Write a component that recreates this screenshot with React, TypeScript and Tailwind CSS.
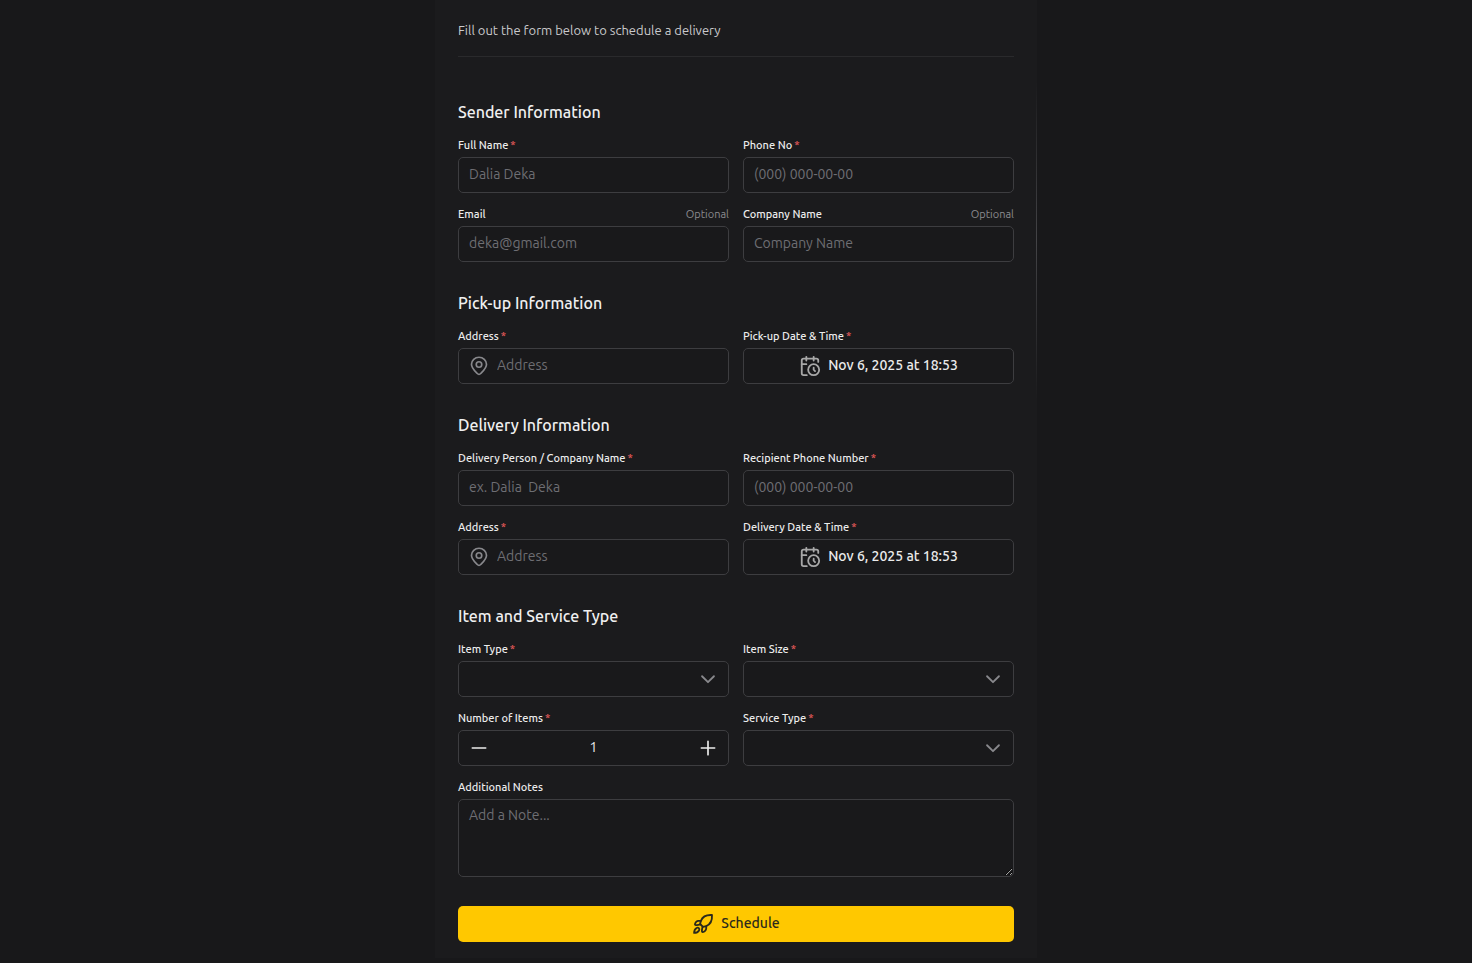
import { useId, useState, type ReactNode } from 'react';

const box =
  'w-full h-9 rounded-[5px] border border-[#3d3d40] bg-[#19191b] text-sm leading-5 text-[#ececec] placeholder:text-[#6e6e73] outline-none';

function Icon({ children, className }: { children: ReactNode; className?: string }) {
  return (
    <svg
      viewBox="0 0 24 24"
      fill="none"
      stroke="currentColor"
      strokeWidth="2"
      strokeLinecap="round"
      strokeLinejoin="round"
      aria-hidden="true"
      className={className}
    >
      {children}
    </svg>
  );
}

function PinIcon() {
  return (
    <Icon className="size-5 shrink-0 text-[#88888c]">
      <path d="M12 22 C11.2 22 10.5 21.6 9.9 21 C7 18.1 3 14.8 3 10 A9 8.5 0 0 1 21 10 C21 14.8 17 18.1 14.1 21 C13.5 21.6 12.8 22 12 22 Z" />
      <circle cx="12" cy="10.2" r="3.3" />
    </Icon>
  );
}

function CalendarClockIcon() {
  return (
    <Icon className="size-[22px] shrink-0 text-[#a8a8a8]">
      <path d="M21 7.5V6a2 2 0 0 0-2-2H5a2 2 0 0 0-2 2v14a2 2 0 0 0 2 2h3.5" />
      <path d="M16 2v4M8 2v4M3 10h5" />
      <circle cx="16" cy="16" r="6" />
      <path d="M16 13.8V16l1.5 1.5" />
    </Icon>
  );
}

function RocketIcon() {
  return (
    <Icon className="size-[22px] shrink-0">
      <path d="M21.8 2.2C15.5 1.8 11.5 4 9.7 8.5L8.8 12 12 15.2 15.5 14.3C20 12.5 22.2 8.5 21.8 2.2Z" />
      <path d="M9.7 8.5H7C5.3 8.5 3.4 10.5 3.2 12.3C3.1 13.7 6.5 13.2 9.2 12.4" />
      <path d="M15.5 14.3V17C15.5 18.7 13.5 20.6 11.7 20.8C10.3 20.9 10.8 17.5 11.6 14.8" />
      <path d="M5 16.3C6.7 15.2 8.8 17.3 7.7 19C6.7 20.7 4.5 21.7 2.3 21.7C2.3 19.5 3.3 17.3 5 16.3Z" />
    </Icon>
  );
}

function Chevron() {
  return (
    <Icon className="pointer-events-none col-start-1 row-start-1 mr-2.5 size-[22px] justify-self-end text-[#88888c]">
      <path d="m5.5 9 6.5 6.5L18.5 9" />
    </Icon>
  );
}

function Label({ htmlFor, text, required, optional }: { htmlFor: string; text: string; required?: boolean; optional?: boolean }) {
  return (
    <div className="flex justify-between text-[11px] leading-4">
      <label htmlFor={htmlFor} className="font-medium text-[#ececec]">
        {text}
        {required && <span className="ml-0.5 text-[#e55a5a]">*</span>}
      </label>
      {optional && <span className="text-[#8b8b8f]">Optional</span>}
    </div>
  );
}

type FieldProps = { label: string; required?: boolean; optional?: boolean };

function TextField({ placeholder, type = 'text', ...f }: FieldProps & { placeholder: string; type?: string }) {
  const id = useId();
  return (
    <div className="flex min-w-0 flex-col gap-1">
      <Label htmlFor={id} text={f.label} required={f.required} optional={f.optional} />
      <input id={id} type={type} placeholder={placeholder} className={`${box} px-2.5 pb-0.5`} />
    </div>
  );
}

function AddressField() {
  const id = useId();
  return (
    <div className="flex min-w-0 flex-col gap-1">
      <Label htmlFor={id} text="Address" required />
      <div className={`${box} flex items-center gap-2 px-2.5`}>
        <PinIcon />
        <input
          id={id}
          placeholder="Address"
          className="w-full min-w-0 bg-transparent pb-0.5 outline-none placeholder:text-[#6e6e73]"
        />
      </div>
    </div>
  );
}

function DateField({ label }: { label: string }) {
  const id = useId();
  return (
    <div className="flex min-w-0 flex-col gap-1">
      <Label htmlFor={id} text={label} required />
      <button id={id} type="button" className={`${box} flex items-center justify-center gap-[7px] font-medium`}>
        <CalendarClockIcon />
        <span className="pb-0.5">Nov 6, 2025 at 18:53</span>
      </button>
    </div>
  );
}

function SelectField({ label, options }: { label: string; options: string[] }) {
  const id = useId();
  return (
    <div className="flex min-w-0 flex-col gap-1">
      <Label htmlFor={id} text={label} required />
      <div className="grid items-center">
        <select id={id} defaultValue="" className={`${box} col-start-1 row-start-1 appearance-none px-2.5`}>
          <option value="" />
          {options.map((o) => (
            <option key={o}>{o}</option>
          ))}
        </select>
        <Chevron />
      </div>
    </div>
  );
}

function CountField() {
  const id = useId();
  const [count, setCount] = useState(1);
  return (
    <div className="flex min-w-0 flex-col gap-1">
      <Label htmlFor={id} text="Number of Items" required />
      <div className={`${box} flex items-center px-2.5`}>
        <button type="button" aria-label="Decrease" onClick={() => setCount(Math.max(1, count - 1))}>
          <Icon className="size-5">
            <path d="M4 12h16" />
          </Icon>
        </button>
        <input
          id={id}
          inputMode="numeric"
          value={count}
          onChange={(e) => setCount(Number(e.target.value) || 1)}
          className="w-full min-w-0 bg-transparent pb-0.5 text-center outline-none"
        />
        <button type="button" aria-label="Increase" onClick={() => setCount(count + 1)}>
          <Icon className="size-5">
            <path d="M4 12h16M12 4v16" />
          </Icon>
        </button>
      </div>
    </div>
  );
}

function Section({ title, children }: { title: string; children: ReactNode }) {
  return (
    <section>
      <h2 className="mb-[13px] text-base leading-6 font-medium text-[#f0f0f0]">{title}</h2>
      <div className="grid grid-cols-2 gap-x-3.5 gap-y-[13px]">{children}</div>
    </section>
  );
}

export default function App() {
  return (
    <div className="min-h-screen bg-[#18181a] font-['Ubuntu','Noto_Sans',sans-serif]">
      <main className="relative mx-auto max-w-[602px] bg-[#1b1b1d] px-[23px] pt-5 pb-4">
        <div
          aria-hidden="true"
          className="absolute top-20 right-0 h-80 w-px bg-linear-to-b from-transparent via-[#444447] to-transparent"
        />
        <p className="border-b border-[#2a2a2c] pb-4 text-[13px] leading-5 text-[#cacacc]">
          Fill out the form below to schedule a delivery
        </p>
        <form className="mt-[43px] flex flex-col gap-[29px]" onSubmit={(e) => e.preventDefault()}>
          <Section title="Sender Information">
            <TextField label="Full Name" required placeholder="Dalia Deka" />
            <TextField label="Phone No" required type="tel" placeholder="(000) 000-00-00" />
            <TextField label="Email" optional type="email" placeholder="deka@gmail.com" />
            <TextField label="Company Name" optional placeholder="Company Name" />
          </Section>
          <Section title="Pick-up Information">
            <AddressField />
            <DateField label="Pick-up Date & Time" />
          </Section>
          <Section title="Delivery Information">
            <TextField label="Delivery Person / Company Name" required placeholder="ex. Dalia  Deka" />
            <TextField label="Recipient Phone Number" required type="tel" placeholder="(000) 000-00-00" />
            <AddressField />
            <DateField label="Delivery Date & Time" />
          </Section>
          <Section title="Item and Service Type">
            <SelectField label="Item Type" options={['Document', 'Parcel']} />
            <SelectField label="Item Size" options={['Small', 'Medium', 'Large']} />
            <CountField />
            <SelectField label="Service Type" options={['Standard', 'Express']} />
            <div className="col-span-2 flex flex-col gap-1">
              <Label htmlFor="notes" text="Additional Notes" />
              <textarea
                id="notes"
                placeholder="Add a Note..."
                className="block h-[78px] w-full rounded-[5px] border border-[#3d3d40] bg-[#19191b] px-2.5 py-[5px] text-sm leading-5 text-[#ececec] outline-none placeholder:text-[#6e6e73]"
              />
            </div>
          </Section>
          <button
            type="submit"
            className="flex h-9 w-full items-center justify-center gap-[7px] rounded-[5px] bg-[#ffc800] text-sm leading-5 font-medium text-[#2b2a1c]"
          >
            <RocketIcon />
            <span className="pb-0.5">Schedule</span>
          </button>
        </form>
      </main>
    </div>
  );
}
